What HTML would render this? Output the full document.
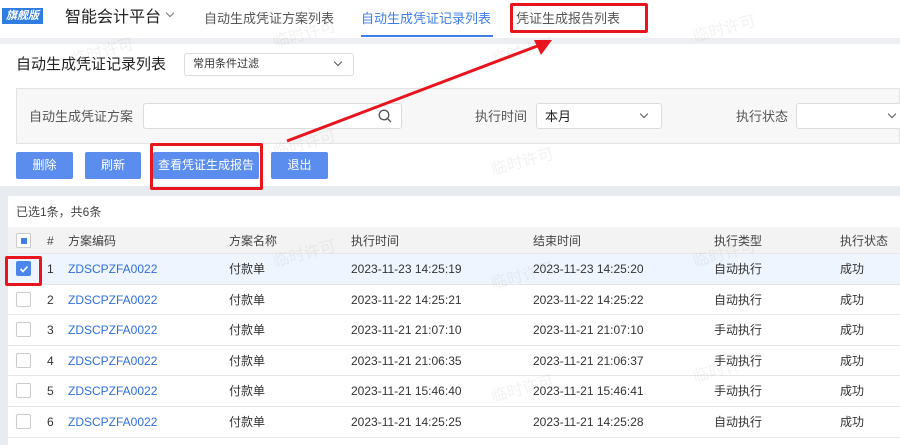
<!DOCTYPE html>
<html><head><meta charset="utf-8"><style>
*{margin:0;padding:0;box-sizing:border-box}
body{width:900px;height:445px;overflow:hidden;background:#fff;font-family:"Liberation Sans","Noto Sans CJK SC",sans-serif;color:#333;position:relative;font-size:12px}
.a{position:absolute;white-space:nowrap;line-height:1.2}
.btn{position:absolute;top:152px;height:27px;background:#5b8def;color:#fff;font-size:12px;line-height:27px;text-align:center;border-radius:2px}
.sel{position:absolute;background:#fff;border:1px solid #dcdcdc;border-radius:3px}
.chev{position:absolute;width:7px;height:7px;border-right:1.3px solid #555;border-bottom:1.3px solid #555;transform:rotate(45deg)}
.row{position:absolute;left:8px;width:892px;height:30.6px;border-bottom:1px solid #e6e6e6;font-size:12px}
.row span{position:absolute;top:8px;line-height:14px;height:14px;white-space:nowrap}
.cb{position:absolute;left:8px;top:7px;width:15px;height:15px;border:1px solid #ccc;border-radius:2px;background:#fff}
.wm{position:absolute;color:rgba(150,150,150,.12);font-size:16px;transform:rotate(-15deg);white-space:nowrap}
</style></head><body>
<div class="a" style="left:2px;top:8px;width:41px;height:16px;background:#2f7de1;color:#fff;font-size:11px;font-style:italic;line-height:16px;text-align:center;font-weight:bold">旗舰版</div>
<div class="a" style="left:65px;top:8px;font-size:16px;color:#222">智能会计平台</div>
<div class="chev" style="left:167px;top:10px;width:6px;height:6px;border-color:#777"></div>
<div class="a" style="left:204px;top:11px;font-size:13px;color:#555">自动生成凭证方案列表</div>
<div class="a" style="left:361px;top:11px;font-size:13px;color:#3f7ee8">自动生成凭证记录列表</div>
<div class="a" style="left:361px;top:35px;width:132px;height:2px;background:#3f7ee8"></div>
<div class="a" style="left:516px;top:11px;font-size:13px;color:#555">凭证生成报告列表</div>
<div class="a" style="left:0;top:38px;width:900px;height:6px;background:#eceef1"></div>
<div class="a" style="left:16px;top:56px;font-size:15px;color:#222">自动生成凭证记录列表</div>
<div class="sel" style="left:184px;top:53px;width:170px;height:23px"><span class="a" style="left:8px;top:4px;font-size:11px">常用条件过滤</span><div class="chev" style="left:150px;top:5px;width:6px;height:6px"></div></div>
<div class="a" style="left:16px;top:88px;width:884px;height:56px;background:#f7f7f7;border:1px solid #e3e3e3"></div>
<div class="a" style="left:29px;top:109px;font-size:13px;color:#555">自动生成凭证方案</div>
<div class="sel" style="left:143px;top:103px;width:259px;height:26px"><svg class="a" style="left:234px;top:5px" width="14" height="14" viewBox="0 0 14 14"><circle cx="6" cy="6" r="4.8" fill="none" stroke="#555" stroke-width="1.3"/><path d="M9.5 9.5L13 13" stroke="#555" stroke-width="1.3"/></svg></div>
<div class="a" style="left:475px;top:109px;font-size:13px;color:#555">执行时间</div>
<div class="sel" style="left:536px;top:103px;width:126px;height:26px"><span class="a" style="left:8px;top:5px;font-size:13px;color:#222">本月</span><div class="chev" style="left:104px;top:7px;width:6px;height:6px"></div></div>
<div class="a" style="left:736px;top:109px;font-size:13px;color:#555">执行状态</div>
<div class="sel" style="left:796px;top:103px;width:110px;height:26px"><div class="chev" style="left:92px;top:7px;width:6px;height:6px"></div></div>
<div class="btn" style="left:16px;width:57px">删除</div>
<div class="btn" style="left:85px;width:56px">刷新</div>
<div class="btn" style="left:153px;width:106px">查看凭证生成报告</div>
<div class="btn" style="left:271px;width:57px">退出</div>
<div class="a" style="left:0;top:186px;width:900px;height:10px;background:#e8ebf0"></div>
<div class="a" style="left:0;top:196px;width:8px;height:249px;background:#e8ebf0"></div>
<div class="a" style="left:16px;top:205px;font-size:12px;color:#444">已选1条，共6条</div>
<div class="row" style="top:227px;height:27px;background:#f3f3f3;color:#444">
<div class="cb" style="top:6px"><div class="a" style="left:4px;top:4px;width:6px;height:6px;background:#3f7ee8"></div></div>
<span style="left:39px;top:7px">#</span><span style="left:60px;top:7px">方案编码</span><span style="left:221px;top:7px">方案名称</span><span style="left:343px;top:7px">执行时间</span><span style="left:525px;top:7px">结束时间</span><span style="left:706px;top:7px">执行类型</span><span style="left:832px;top:7px">执行状态</span></div>
<div class="row" style="top:254px;background:#eef5fe"><div class="cb" style="background:#4a86ea;border-color:#4a86ea"><svg class="a" style="left:2px;top:2px" width="10" height="10" viewBox="0 0 10 10"><path d="M1.5 5L4 7.5L8.5 2.5" fill="none" stroke="#fff" stroke-width="1.6"/></svg></div><span style="left:39px">1</span><span style="left:60px;color:#2f6fd8">ZDSCPZFA0022</span><span style="left:221px">付款单</span><span style="left:343px">2023-11-23 14:25:19</span><span style="left:525px">2023-11-23 14:25:20</span><span style="left:706px">自动执行</span><span style="left:832px">成功</span></div>
<div class="row" style="top:284.6px"><div class="cb"></div><span style="left:39px">2</span><span style="left:60px;color:#2f6fd8">ZDSCPZFA0022</span><span style="left:221px">付款单</span><span style="left:343px">2023-11-22 14:25:21</span><span style="left:525px">2023-11-22 14:25:22</span><span style="left:706px">自动执行</span><span style="left:832px">成功</span></div>
<div class="row" style="top:315.2px"><div class="cb"></div><span style="left:39px">3</span><span style="left:60px;color:#2f6fd8">ZDSCPZFA0022</span><span style="left:221px">付款单</span><span style="left:343px">2023-11-21 21:07:10</span><span style="left:525px">2023-11-21 21:07:10</span><span style="left:706px">手动执行</span><span style="left:832px">成功</span></div>
<div class="row" style="top:345.8px"><div class="cb"></div><span style="left:39px">4</span><span style="left:60px;color:#2f6fd8">ZDSCPZFA0022</span><span style="left:221px">付款单</span><span style="left:343px">2023-11-21 21:06:35</span><span style="left:525px">2023-11-21 21:06:37</span><span style="left:706px">手动执行</span><span style="left:832px">成功</span></div>
<div class="row" style="top:376.4px"><div class="cb"></div><span style="left:39px">5</span><span style="left:60px;color:#2f6fd8">ZDSCPZFA0022</span><span style="left:221px">付款单</span><span style="left:343px">2023-11-21 15:46:40</span><span style="left:525px">2023-11-21 15:46:41</span><span style="left:706px">手动执行</span><span style="left:832px">成功</span></div>
<div class="row" style="top:407px"><div class="cb"></div><span style="left:39px">6</span><span style="left:60px;color:#2f6fd8">ZDSCPZFA0022</span><span style="left:221px">付款单</span><span style="left:343px">2023-11-21 14:25:25</span><span style="left:525px">2023-11-21 14:25:28</span><span style="left:706px">自动执行</span><span style="left:832px">成功</span></div>
<div class="wm" style="left:70px;top:38px">临时许可</div>
<div class="wm" style="left:272px;top:20px">临时许可</div>
<div class="wm" style="left:490px;top:38px">临时许可</div>
<div class="wm" style="left:692px;top:15px">临时许可</div>
<div class="wm" style="left:272px;top:130px">临时许可</div>
<div class="wm" style="left:490px;top:148px">临时许可</div>
<div class="wm" style="left:272px;top:240px">临时许可</div>
<div class="wm" style="left:490px;top:262px">临时许可</div>
<div class="wm" style="left:692px;top:240px">临时许可</div>
<div class="wm" style="left:490px;top:375px">临时许可</div>
<div class="wm" style="left:692px;top:355px">临时许可</div>
<div class="a" style="left:510px;top:3px;width:138px;height:30px;border:3px solid #e8141e;border-radius:2px"></div>
<div class="a" style="left:150px;top:143px;width:113px;height:47px;border:3px solid #e8141e;border-radius:2px"></div>
<div class="a" style="left:5px;top:256px;width:37px;height:30px;border:3px solid #e8141e;border-radius:2px"></div>
<svg class="a" style="left:0;top:0" width="900" height="445"><path d="M287 141L540 45" stroke="#e8141e" stroke-width="3"/><path d="M552 40L534 40L541 55Z" fill="#e8141e"/></svg>
</body></html>
